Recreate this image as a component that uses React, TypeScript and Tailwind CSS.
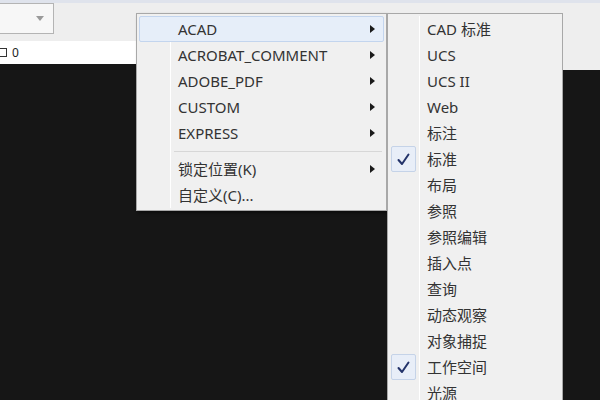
import React from "react";

const font = { fontFamily: '"Noto Sans", "Noto Sans CJK SC", sans-serif' };

function Arrow() {
  return (
    <svg width="5" height="8" viewBox="0 0 5 8" className="block">
      <path d="M0 0 L5 4 L0 8 Z" fill="#1a1a1a" />
    </svg>
  );
}

function Check() {
  return (
    <div className="w-[25px] h-[26px] border border-[#c5d3e8] bg-[#e8eef8] rounded-[2px] flex items-center justify-center">
      <svg width="13" height="13" viewBox="0 0 13 13">
        <path d="M1.5 7 L5 11 L11.5 1.5" fill="none" stroke="#23336a" strokeWidth="2" strokeLinecap="round" strokeLinejoin="round" />
      </svg>
    </div>
  );
}

const menu1 = [
  { t: "ACAD", hl: true },
  { t: "ACROBAT_COMMENT" },
  { t: "ADOBE_PDF" },
  { t: "CUSTOM" },
  { t: "EXPRESS" },
];

const menu2 = [
  "CAD 标准",
  "UCS",
  "UCS II",
  "Web",
  "标注",
  "标准",
  "布局",
  "参照",
  "参照编辑",
  "插入点",
  "查询",
  "动态观察",
  "对象捕捉",
  "工作空间",
  "光源",
];
const checked = new Set(["标准", "工作空间"]);

export default function App() {
  return (
    <div className="relative w-[600px] h-[400px] overflow-hidden bg-[#161616]" style={font}>
      {/* toolbar area */}
      <div className="h-[3px] bg-[#dfe3ec]" />
      <div className="h-[38px] bg-[#eeeeee] flex items-start">
        <div className="w-[54px] h-[31px] border border-[#b4b4b4] border-l-0 bg-[#f7f7f7] flex items-center justify-end pr-[9px]">
          <svg width="8" height="5" viewBox="0 0 8 5">
            <path d="M0 0 L8 0 L4 5 Z" fill="#9a9a9a" />
          </svg>
        </div>
      </div>
      <div className="h-[23px] flex">
        <div className="w-[300px] bg-white flex items-center gap-[5px] text-[12px] text-[#222]">
          <div className="w-[7px] h-[9px] border border-[#333] border-l-0" />
          <span>0</span>
        </div>
        <div className="flex-1 bg-[#eeeeee]" />
      </div>
      <div className="flex">
        <div className="flex-1" />
        <div className="w-[38px] h-[6px] bg-[#eeeeee]" />
      </div>

      {/* first menu */}
      <div className="absolute left-[136px] top-[13px] w-[251px] h-[198px] bg-[#f0f0f0] border border-[#a8a8a8] shadow-[2px_2px_3px_rgba(0,0,0,0.45)] p-[2px]">
        <div className="absolute left-[33px] top-[2px] bottom-[2px] w-[1px] bg-[#e2e2e2] border-r border-white" />
        {menu1.map((m) => (
          <div
            key={m.t}
            className={`relative h-[26px] flex items-center pl-[38px] pr-[8px] text-[15px] text-[#333333] ${
              m.hl ? "bg-[#e6eef9] border border-[#c3d5ee] rounded-[2px]" : "border border-transparent"
            }`}
          >
            <span className="flex-1">{m.t}</span>
            <Arrow />
          </div>
        ))}
        <div className="relative h-[10px] flex items-center pl-[35px] pr-[2px]">
          <div className="flex-1 h-[1px] bg-[#d7d7d7]" />
        </div>
        <div className="relative h-[26px] flex items-center pl-[38px] pr-[8px] text-[15px] text-[#333333] border border-transparent">
          <span className="flex-1">锁定位置(K)</span>
          <Arrow />
        </div>
        <div className="relative h-[26px] flex items-center pl-[38px] pr-[8px] text-[15px] text-[#333333] border border-transparent">
          <span className="flex-1">自定义(C)...</span>
        </div>
      </div>

      {/* second menu */}
      <div className="absolute left-[387px] top-[13px] w-[176px] h-[400px] bg-[#f0f0f0] border border-[#a8a8a8] p-[2px]">
        <div className="absolute left-[31px] top-[2px] bottom-0 w-[1px] bg-[#e2e2e2] border-r border-white" />
        {menu2.map((t) => (
          <div key={t} className="relative h-[26px] flex items-center text-[15px] text-[#333333]">
            <div className="w-[37px] flex items-center pl-[1px]">{checked.has(t) ? <Check /> : null}</div>
            <span>{t}</span>
          </div>
        ))}
      </div>
    </div>
  );
}
